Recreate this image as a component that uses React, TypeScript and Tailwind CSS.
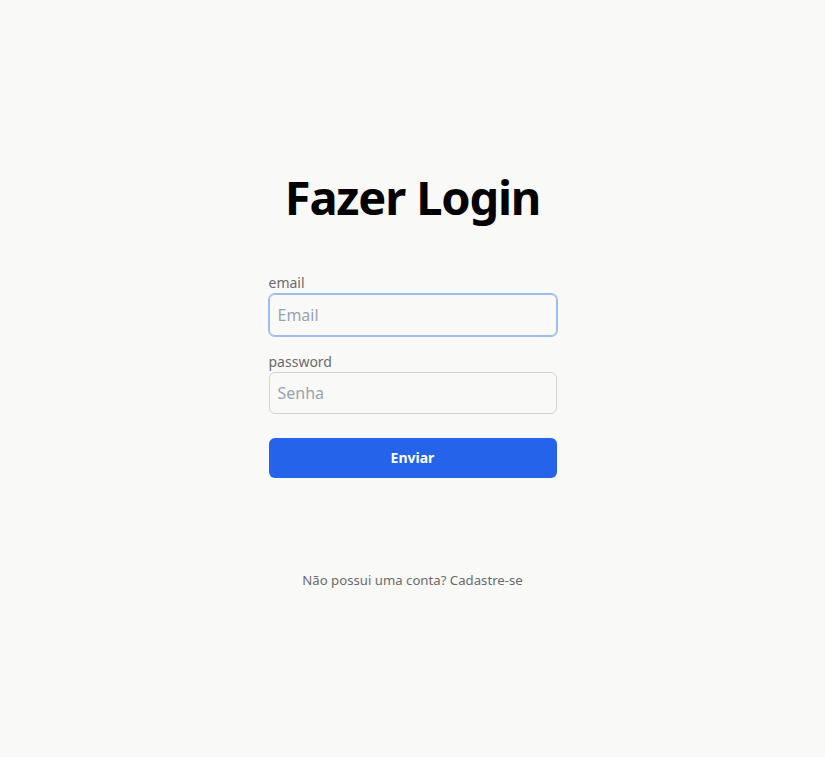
export default function App() {
  return (
    <div
      className="min-h-screen bg-[#f9f9f8] flex flex-col items-center pt-[173px]"
      style={{ fontFamily: '"Noto Sans", "Open Sans", sans-serif' }}
    >
      <h1 className="text-[47px] leading-[48px] tracking-[-0.025em] font-bold text-black">
        Fazer Login
      </h1>
      <form className="w-72 mt-[52px] flex flex-col" onSubmit={(e) => e.preventDefault()}>
        <label htmlFor="email" className="text-sm leading-5 text-[#6b6b6b]">
          email
        </label>
        <input
          id="email"
          type="email"
          placeholder="Email"
          className="mt-px h-[42px] w-full rounded-md border border-[#9fbbec] ring-1 ring-[#9fbbec] bg-transparent px-2 text-base text-black placeholder:text-[#9aa3b2] outline-none"
        />
        <label htmlFor="password" className="mt-4 text-sm leading-5 text-[#6b6b6b]">
          password
        </label>
        <input
          id="password"
          type="password"
          placeholder="Senha"
          className="h-[42px] w-full rounded-md border border-[#d4d4d4] bg-transparent px-2 text-base text-black placeholder:text-[#9aa3b2] outline-none"
        />
        <button
          type="submit"
          className="mt-6 h-10 w-full rounded-md bg-[#2563eb] text-sm font-bold text-white"
        >
          Enviar
        </button>
      </form>
      <p className="mt-[92px] text-[13.2px] leading-5 text-[#6b6b6b]">
        Não possui uma conta? Cadastre-se
      </p>
    </div>
  );
}
